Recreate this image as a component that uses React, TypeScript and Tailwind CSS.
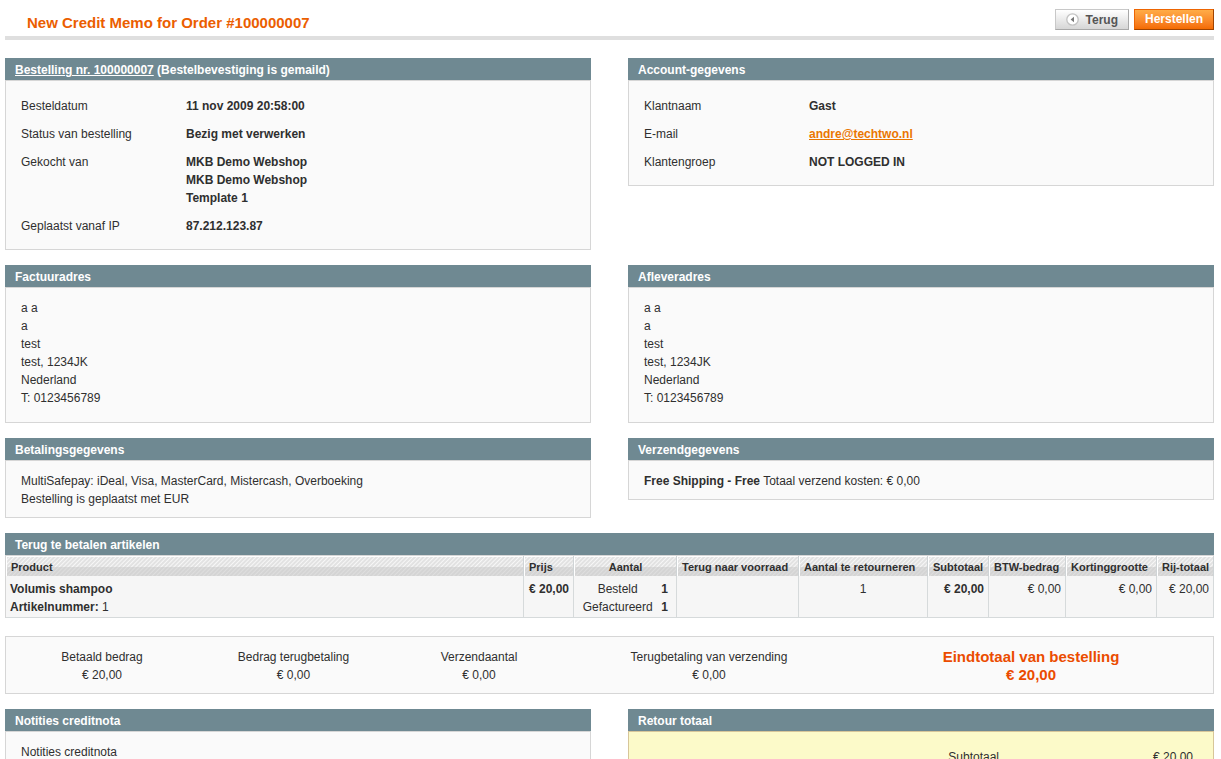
import type { ReactNode } from "react";

interface PanelProps {
  title: ReactNode;
  children: ReactNode;
  bodyClass?: string;
}

interface InfoRow {
  label: string;
  value: ReactNode;
}

const orderRows: InfoRow[] = [
  { label: "Besteldatum", value: "11 nov 2009 20:58:00" },
  { label: "Status van bestelling", value: "Bezig met verwerken" },
  {
    label: "Gekocht van",
    value: (
      <>
        MKB Demo Webshop
        <br />
        MKB Demo Webshop
        <br />
        Template 1
      </>
    ),
  },
  { label: "Geplaatst vanaf IP", value: "87.212.123.87" },
];

const accountRows: InfoRow[] = [
  { label: "Klantnaam", value: "Gast" },
  {
    label: "E-mail",
    value: (
      <a href="mailto:andre@techtwo.nl" className="text-[#ea7601] underline">
        andre@techtwo.nl
      </a>
    ),
  },
  { label: "Klantengroep", value: "NOT LOGGED IN" },
];

const address = ["a a", "a", "test", "test, 1234JK", "Nederland", "T: 0123456789"];

const columns = [
  { label: "Product", width: "", align: "text-left" },
  { label: "Prijs", width: "w-[50px]", align: "text-left" },
  { label: "Aantal", width: "w-[103px]", align: "text-center" },
  { label: "Terug naar voorraad", width: "w-[122px]", align: "text-left" },
  { label: "Aantal te retourneren", width: "w-[129px]", align: "text-left" },
  { label: "Subtotaal", width: "w-[61px]", align: "text-left" },
  { label: "BTW-bedrag", width: "w-[77px]", align: "text-left" },
  { label: "Kortinggrootte", width: "w-[91px]", align: "text-left" },
  { label: "Rij-totaal", width: "w-[57px]", align: "text-left" },
];

const totals = [
  { label: "Betaald bedrag", value: "€ 20,00" },
  { label: "Bedrag terugbetaling", value: "€ 0,00" },
  { label: "Verzendaantal", value: "€ 0,00" },
  { label: "Terugbetaling van verzending", value: "€ 0,00" },
];

function PanelHead({ children }: { children: ReactNode }) {
  return (
    <h2 className="h-[22px] bg-[#6f8992] px-2.5 text-xs/[24px] font-bold text-white">
      {children}
    </h2>
  );
}

function Panel({ title, children, bodyClass }: PanelProps) {
  return (
    <section>
      <PanelHead>{title}</PanelHead>
      <div
        className={`border ${bodyClass ?? "border-[#d6d6d6] bg-[#fafafa] px-[15px] pt-[11px] pb-[9px]"}`}
      >
        {children}
      </div>
    </section>
  );
}

function InfoTable({ rows }: { rows: InfoRow[] }) {
  return (
    <table className="w-full">
      <tbody>
        {rows.map((row) => (
          <tr key={row.label} className="align-top">
            <th scope="row" className="w-[165px] py-[5px] text-left font-normal">
              {row.label}
            </th>
            <td className="py-[5px] font-bold">{row.value}</td>
          </tr>
        ))}
      </tbody>
    </table>
  );
}

function Address() {
  return (
    <address className="pb-[6px] not-italic">
      {address.map((line) => (
        <div key={line}>{line}</div>
      ))}
    </address>
  );
}

function ItemsTable() {
  return (
    <table className="w-full table-fixed border-separate border-spacing-0 border-l border-t border-[#d6d6d6] bg-[#f6f6f6]">
      <thead>
        <tr>
          {columns.map((col) => (
            <th
              key={col.label}
              className={`h-5 border-r border-[#cfd4d6] bg-white p-0 pl-px pt-px ${col.width}`}
            >
              <div className="bg-[linear-gradient(#ffffff40_0_10px,#d2d2d2a6_10px),repeating-linear-gradient(135deg,#d8d8d8_0_1px,#f4f4f4_2px,#d8d8d8_3px)]">
                <div
                  className={`h-[19px] whitespace-nowrap px-1 text-[11px]/[20px] font-bold ${col.align}`}
                >
                  {col.label}
                </div>
              </div>
            </th>
          ))}
        </tr>
      </thead>
      <tbody>
        <tr className="align-top whitespace-nowrap *:border-r *:border-b *:border-[#d6dadb] *:pt-1 *:pb-px">
          <td className="px-1">
            <strong>Volumis shampoo</strong>
            <br />
            <strong>Artikelnummer:</strong> 1
          </td>
          <td className="px-1 text-right font-bold">€ 20,00</td>
          <td className="px-2">
            <div className="grid grid-cols-[1fr_auto] gap-x-2 text-center">
              <span>Besteld</span>
              <strong>1</strong>
              <span>Gefactureerd</span>
              <strong>1</strong>
            </div>
          </td>
          <td />
          <td className="px-1 text-center">1</td>
          <td className="px-1 text-right font-bold">€ 20,00</td>
          <td className="px-1 text-right">€ 0,00</td>
          <td className="px-1 text-right">€ 0,00</td>
          <td className="px-1 text-right">€ 20,00</td>
        </tr>
      </tbody>
    </table>
  );
}

export default function App() {
  return (
    <main className="h-screen overflow-hidden bg-white pl-[5px] pr-[7px] pt-[9px] font-['Liberation_Sans',Arial,sans-serif] text-xs/[18px] text-[#2f2f2f]">
      <header className="mb-[18px] flex items-center justify-between border-b-4 border-[#dfdfdf] pb-[6px]">
        <h1 className="pl-[22px] pt-[6px] text-[15px]/[15px] font-bold text-[#eb5e00]">
          New Credit Memo for Order #100000007
        </h1>
        <div className="flex gap-[5px]">
          <button
            type="button"
            className="flex h-[21px] items-center gap-[7px] border border-[#c8c8c8] border-r-[#a8a8a8] border-b-[#a8a8a8] bg-linear-to-b from-white to-[#d6d6d6] pl-2.5 pr-2.5 font-bold text-[#555]"
          >
            <svg width="13" height="13" viewBox="0 0 13 13" aria-hidden="true">
              <circle cx="6.5" cy="6.5" r="5.7" fill="#fff" stroke="#c2c2c2" strokeWidth="1.3" />
              <path d="M8 3.8v5.4L4.6 6.5z" fill="#777" />
            </svg>
            Terug
          </button>
          <button
            type="button"
            className="h-[21px] border border-[#ed6502] border-r-[#a04300] border-b-[#a04300] bg-linear-to-b from-[#ffac47] to-[#f46b00] px-2.5 text-xs/[19px] font-bold text-white"
          >
            Herstellen
          </button>
        </div>
      </header>

      <div className="grid grid-cols-2 items-start gap-x-[37px] gap-y-[15px]">
        <Panel
          title={
            <>
              <a href="#order" className="underline">
                Bestelling nr. 100000007
              </a>{" "}
              (Bestelbevestiging is gemaild)
            </>
          }
        >
          <InfoTable rows={orderRows} />
        </Panel>
        <Panel title="Account-gegevens">
          <InfoTable rows={accountRows} />
        </Panel>

        <Panel title="Factuuradres">
          <Address />
        </Panel>
        <Panel title="Afleveradres">
          <Address />
        </Panel>

        <Panel title="Betalingsgegevens">
          MultiSafepay: iDeal, Visa, MasterCard, Mistercash, Overboeking
          <br />
          Bestelling is geplaatst met EUR
        </Panel>
        <Panel title="Verzendgegevens">
          <strong>Free Shipping - Free</strong> Totaal verzend kosten: € 0,00
        </Panel>
      </div>

      <section className="mt-[15px]">
        <PanelHead>Terug te betalen artikelen</PanelHead>
        <ItemsTable />
      </section>

      <dl className="mt-[18px] mb-[15px] grid grid-cols-[192fr_191fr_180fr_280fr_364fr] border border-[#d6d6d6] bg-[#fafafa] pt-[11px] pb-[9px] text-center">
        {totals.map((total) => (
          <div key={total.label}>
            <dt>{total.label}</dt>
            <dd>{total.value}</dd>
          </div>
        ))}
        <div className="text-[15px]/[18px] font-bold text-[#eb4c00]">
          <dt>Eindtotaal van bestelling</dt>
          <dd>€ 20,00</dd>
        </div>
      </dl>

      <div className="grid grid-cols-2 items-start gap-x-[37px]">
        <Panel title="Notities creditnota">
          <label htmlFor="memo-notes" className="block">
            Notities creditnota
          </label>
          <textarea id="memo-notes" rows={3} className="w-full border border-[#aaa] bg-white" />
        </Panel>
        <Panel title="Retour totaal" bodyClass="border-[#d7c699] bg-[#fcfac9] px-5 py-4">
          <dl className="flex justify-end text-right">
            <dt>Subtotaal</dt>
            <dd className="w-[194px]">€ 20,00</dd>
          </dl>
        </Panel>
      </div>
    </main>
  );
}
